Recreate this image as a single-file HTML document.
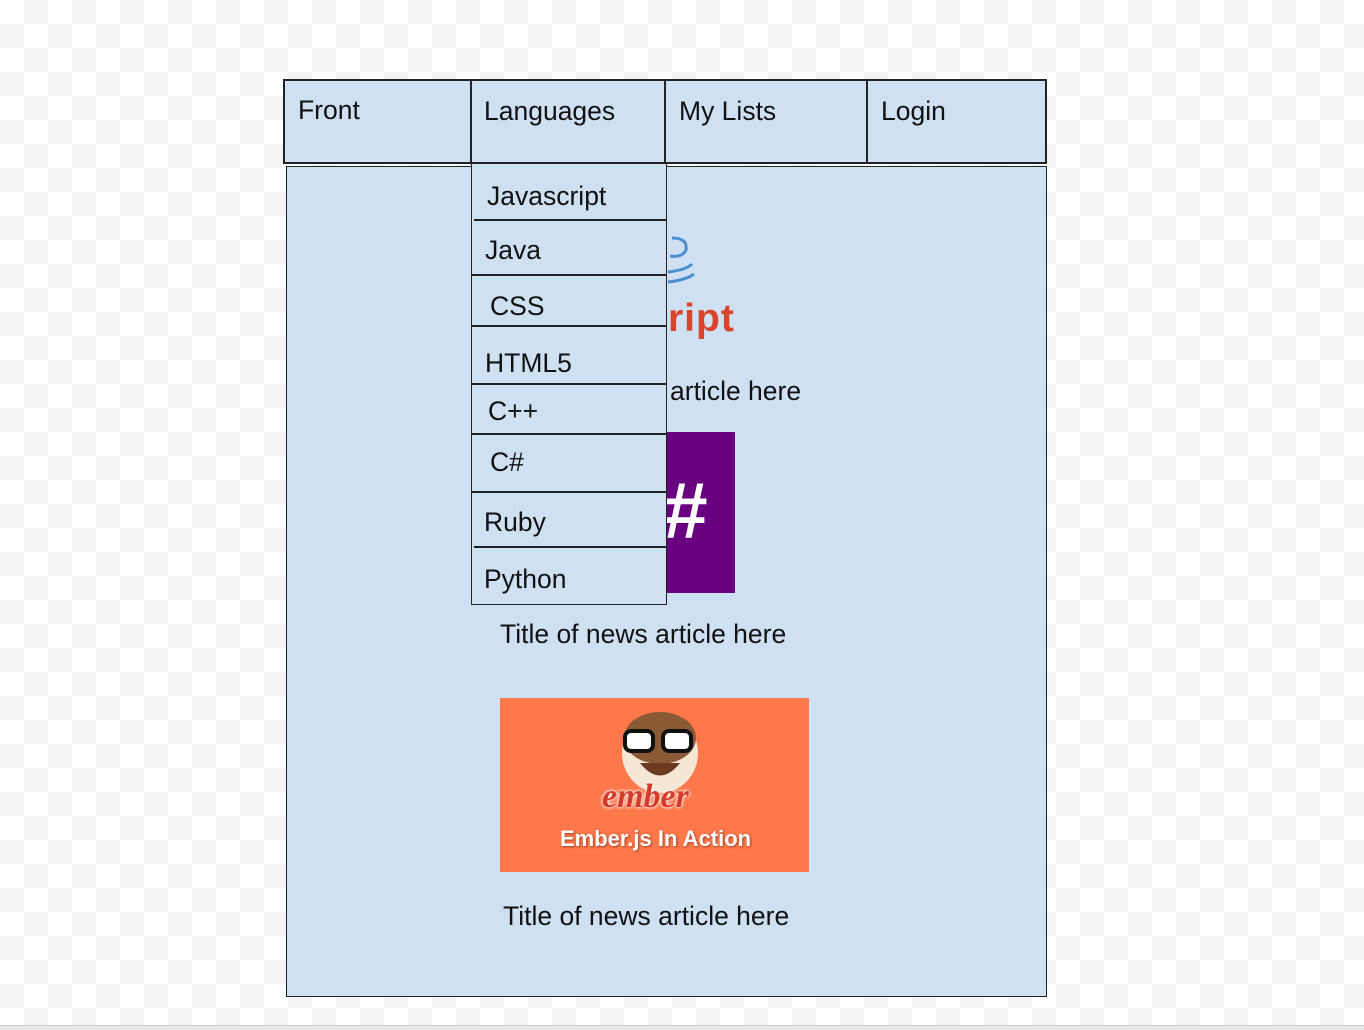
<!DOCTYPE html>
<html><head><style>
html,body{margin:0;padding:0;}
body{width:1364px;height:1029px;position:relative;overflow:hidden;font-family:"Liberation Sans",Arial,sans-serif;color:#111;
background-color:#fff;
background-image:linear-gradient(45deg,#f4f4f4 25%,transparent 25%,transparent 75%,#f4f4f4 75%),linear-gradient(45deg,#f4f4f4 25%,transparent 25%,transparent 75%,#f4f4f4 75%);
background-size:48px 48px;background-position:0 0,24px 24px;}
.b{position:absolute;background:#cfe0f2;border:1.5px solid #222;box-sizing:border-box;}
.t{position:absolute;font-size:26.5px;white-space:nowrap;}
.line{position:absolute;height:1.5px;background:#222;}
</style></head><body>
<div class="b" style="left:283px;top:79px;width:764px;height:85px;border-width:2px;"></div>
<div class="line" style="left:470px;top:79px;width:1.5px;height:85px;"></div>
<div class="line" style="left:664px;top:79px;width:1.5px;height:85px;"></div>
<div class="line" style="left:866px;top:79px;width:1.5px;height:85px;"></div>
<div class="t" style="left:298px;top:95px">Front</div>
<div class="t" style="left:484px;top:96px">Languages</div>
<div class="t" style="left:679px;top:96px">My Lists</div>
<div class="t" style="left:881px;top:96px">Login</div>
<div class="b" style="left:286px;top:166px;width:761px;height:831px;"></div>
<div style="position:absolute;left:666px;top:230px;width:28px;height:60px;">
<svg width="30" height="60"><path d="M6 8 Q22 8 20 20 Q16 28 4 26" stroke="#4a8fd0" stroke-width="3" fill="none"/><path d="M2 42 Q20 40 26 34" stroke="#4a8fd0" stroke-width="3" fill="none"/><path d="M2 52 Q20 50 28 44" stroke="#4a8fd0" stroke-width="3" fill="none"/></svg></div>
<div class="t" style="left:668px;top:297px;font-size:39px;color:#d9442c;font-weight:bold;letter-spacing:1px;">ript</div>
<div class="t" style="left:670px;top:376px;">article here</div>
<div style="position:absolute;left:666px;top:432px;width:69px;height:161px;background:#68007f;"></div>
<div class="t" style="left:662px;top:465px;font-size:80px;color:#fff;font-weight:bold;font-style:italic;">#</div>
<div class="t" style="left:500px;top:619px;">Title of news article here</div>
<div style="position:absolute;left:500px;top:698px;width:309px;height:174px;background:#fe784b;">
<svg width="309" height="174" style="position:absolute;left:0;top:0">
<ellipse cx="160" cy="55" rx="38" ry="40" fill="#f6e6d4"/>
<ellipse cx="160" cy="40" rx="36" ry="26" fill="#8a5a36"/>
<rect x="125" y="33" width="28" height="20" rx="6" fill="#fff" stroke="#111" stroke-width="4"/>
<rect x="163" y="33" width="28" height="20" rx="6" fill="#fff" stroke="#111" stroke-width="4"/>
<path d="M140 65 Q160 90 180 65 Z" fill="#6b3a20"/>
</svg>
<div class="t" style="left:102px;top:80px;font-size:34px;color:#d63a2b;font-style:italic;font-weight:bold;font-family:'Liberation Serif',serif;text-shadow:0 0 3px #fff,0 0 3px #fff;">ember</div>
<div class="t" style="left:60px;top:128px;font-size:22px;color:#fff;font-weight:bold;text-shadow:1px 1px 2px #a04020;">Ember.js In Action</div>
</div>
<div class="t" style="left:503px;top:901px;">Title of news article here</div>
<div class="b" style="left:471px;top:163px;width:196px;height:442px;"></div>
<div class="line" style="left:474px;top:219px;width:193px;"></div>
<div class="line" style="left:472px;top:274px;width:195px;"></div>
<div class="line" style="left:472px;top:325px;width:195px;"></div>
<div class="line" style="left:472px;top:383px;width:195px;"></div>
<div class="line" style="left:472px;top:433px;width:195px;"></div>
<div class="line" style="left:472px;top:491px;width:195px;"></div>
<div class="line" style="left:474px;top:546px;width:193px;"></div>
<div class="t" style="left:487px;top:181px">Javascript</div>
<div class="t" style="left:485px;top:235px">Java</div>
<div class="t" style="left:490px;top:291px">CSS</div>
<div class="t" style="left:485px;top:348px">HTML5</div>
<div class="t" style="left:488px;top:396px">C++</div>
<div class="t" style="left:490px;top:447px">C#</div>
<div class="t" style="left:484px;top:507px">Ruby</div>
<div class="t" style="left:484px;top:564px">Python</div>
<div style="position:absolute;left:0;top:1025px;width:1364px;height:4px;background:#e8e8e8;border-top:1px solid #ccc;"></div>
</body></html>
